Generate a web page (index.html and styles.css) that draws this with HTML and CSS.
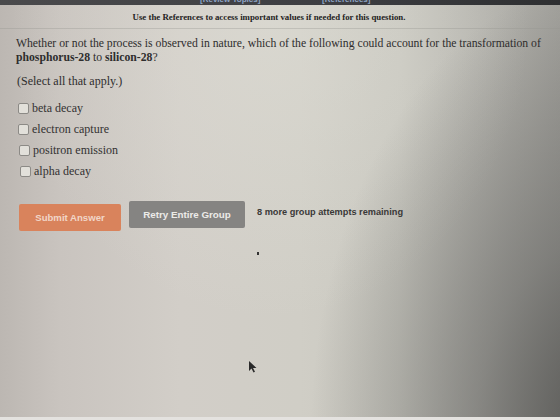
FILE: index.html
```html
<!DOCTYPE html>
<html>
<head>
<meta charset="utf-8">
<link rel="stylesheet" href="styles.css">
</head>
<body>
<div class="screen">
  <div class="topbar">
    <span class="toplink one">[Review Topics]</span>
    <span class="toplink two">[References]</span>
  </div>
  <div class="refnote">Use the References to access important values if needed for this question.</div>
  <div class="content">
    <p class="question">Whether or not the process is observed in nature, which of the following could account for the transformation of <b>phosphorus-28</b> to <b>silicon-28</b>?</p>
    <p class="instr">(Select all that apply.)</p>
    <ul class="options">
      <li><span class="box"></span>beta decay</li>
      <li><span class="box"></span>electron capture</li>
      <li><span class="box"></span>positron emission</li>
      <li><span class="box"></span>alpha decay</li>
    </ul>
    <div class="actions">
      <span class="btn submit">Submit Answer</span>
      <span class="btn retry">Retry Entire Group</span>
      <span class="attempts">8 more group attempts remaining</span>
    </div>
  </div>
  <div class="dot"></div>
  <svg class="cursor" width="9" height="12" viewBox="0 0 9 12"><path d="M1 0 L1 10 L3.5 7.5 L5.5 11.5 L7 10.8 L5 7 L8.5 7 Z" fill="#2a2a2a"/></svg>
  <div class="bottomstrip"></div>
</div>
</body>
</html>
```
FILE: styles.css
```css
html, body {
  margin: 0;
  padding: 0;
}
.screen {
  position: relative;
  width: 560px;
  height: 420px;
  overflow: hidden;
  background:
    radial-gradient(ellipse 300px 460px at 610px 440px, rgba(70,70,68,0.85) 0%, rgba(90,90,88,0.5) 45%, rgba(120,120,116,0) 100%),
    radial-gradient(ellipse 260px 300px at 270px 20px, rgba(225,224,216,0.5), rgba(225,224,216,0) 100%),
    linear-gradient(to right, #bcb7b2 0px, #c9c4bf 60px, #d2cec8 180px, #d0cec6 300px, #c8c7bf 400px, #b6b5af 480px, #a3a29d 560px);
  font-family: "Liberation Serif", "Times New Roman", serif;
  color: #2b2a2a;
}
.topbar {
  height: 5px;
  background: linear-gradient(to right, #4a4a4c, #3d3e42 60%, #2e2f31);
  position: relative;
  overflow: hidden;
}
.toplink {
  position: absolute;
  top: -5px;
  line-height: 9px;
  font-family: "Liberation Sans", Arial, sans-serif;
  font-size: 8px;
  font-weight: bold;
  color: #8fa6c8;
}
.toplink.one { left: 200px; }
.toplink.two { left: 322px; }
.refnote {
  text-align: center;
  font-weight: bold;
  font-size: 8.8px;
  padding: 7px 22px 0 0;
  height: 16px;
  color: #242323;
  border-bottom: 1px solid rgba(150,148,142,0.35);
}
.content {
  padding: 0 0 0 16px;
}
.question {
  margin: 8px 0 0 0;
  font-size: 11.7px;
  line-height: 14px;
  width: 536px;
  color: #2e2d2d;
}
.question b {
  font-weight: bold;
}
.instr {
  margin: 10px 0 0 1px;
  font-size: 12px;
  line-height: 13px;
  color: #2e2d2d;
}
.options {
  list-style: none;
  margin: 10px 0 0 2px;
  padding: 0;
}
.options li {
  display: flex;
  align-items: center;
  height: 21px;
  font-size: 12px;
  color: #333232;
}
.options li:nth-child(n+3) { padding-left: 1px; }
.options li:nth-child(4) { padding-left: 2px; }
.box {
  width: 9px;
  height: 9px;
  border: 1px solid #8c8a86;
  border-radius: 2px;
  background: #e2e0da;
  margin-right: 3px;
}
.actions {
  display: flex;
  align-items: flex-start;
  margin: 19px 0 0 3px;
  font-family: "Liberation Sans", Arial, sans-serif;
}
.btn {
  display: flex;
  align-items: center;
  justify-content: center;
  font-size: 9.6px;
  font-weight: bold;
  border-radius: 2px;
  color: #ece6e0;
}
.submit {
  width: 102px;
  height: 27px;
  margin-top: 3px;
  background: #d9835c;
  color: #f1d6c8;
}
.retry {
  width: 116px;
  height: 27px;
  margin-left: 8px;
  background: #858482;
  color: #ecebe8;
  font-size: 9.8px;
}
.attempts {
  margin: 6px 0 0 12px;
  font-size: 9.2px;
  font-weight: bold;
  color: #3a3938;
}
.dot {
  position: absolute;
  left: 257px;
  top: 252px;
  width: 2px;
  height: 3px;
  background: #333;
}
.cursor {
  position: absolute;
  left: 248px;
  top: 361px;
}
.bottomstrip {
  position: absolute;
  left: 0;
  bottom: 0;
  width: 560px;
  height: 3px;
  background: #e4e2df;
}
```
